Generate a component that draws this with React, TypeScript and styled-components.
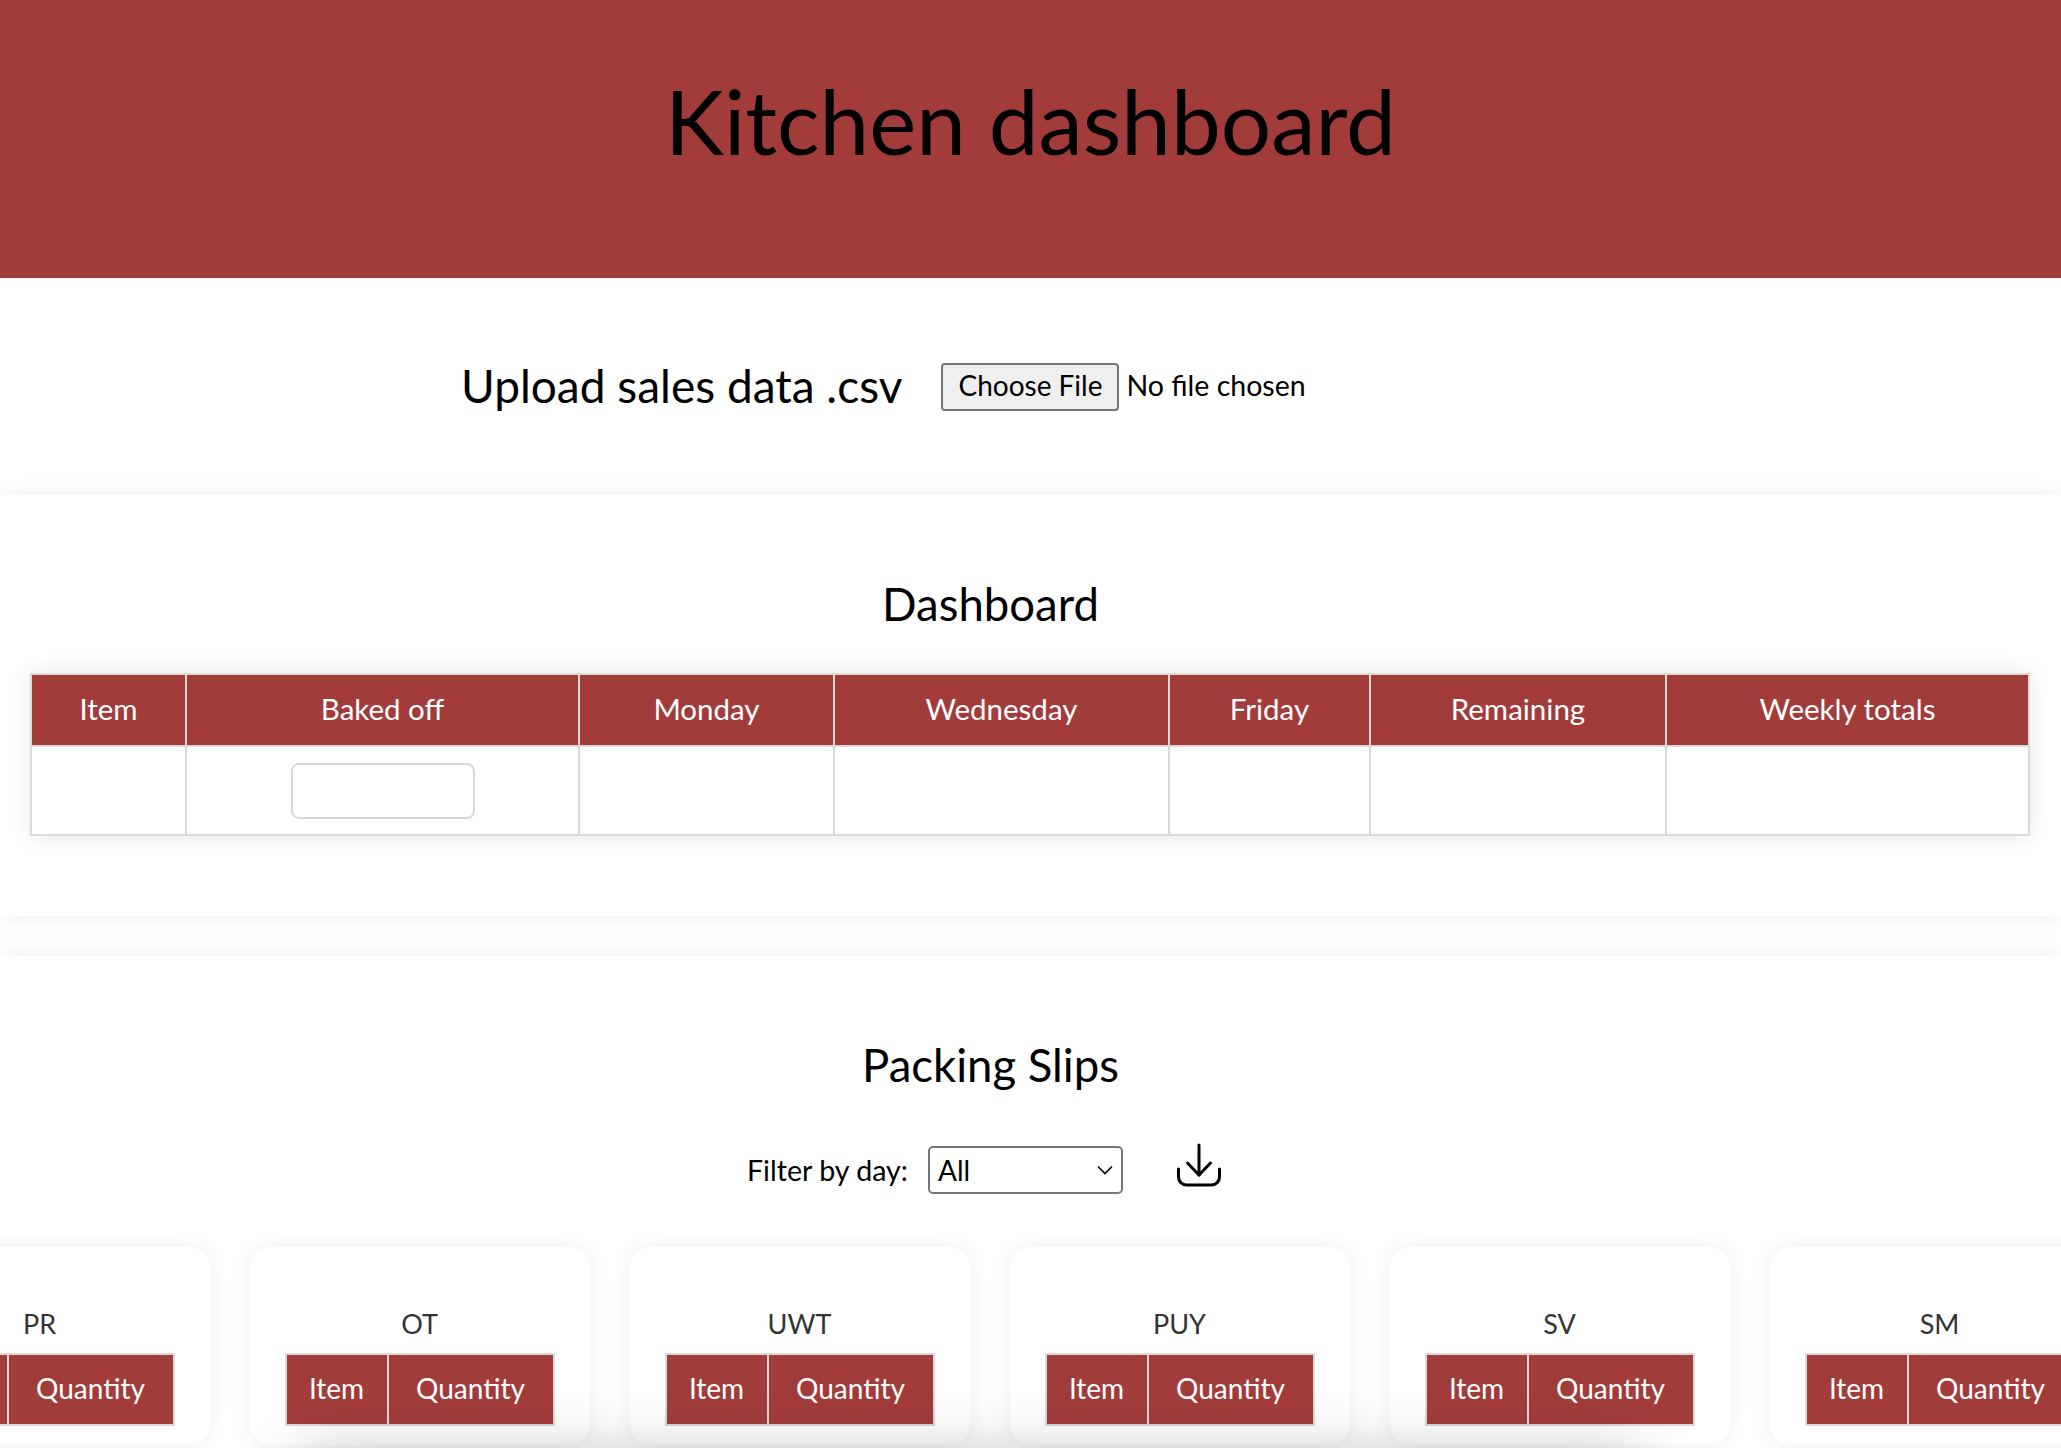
import React from 'react';
import styled, { createGlobalStyle } from 'styled-components';

const RED = '#a23c3b';
const LINE = '#d9d9d9';
const FONT = '"Lato", "Open Sans", sans-serif';

const GlobalStyle = createGlobalStyle`
  html, body {
    margin: 0;
    padding: 0;
    background: #fff;
    color: #000;
    font-family: ${FONT};
  }
`;

const Page = styled.div`
  position: relative;
  width: 2061px;
  height: 1448px;
  overflow: hidden;
`;

const Header = styled.header`
  height: 278px;
  background: ${RED};
  display: flex;
  justify-content: center;
  padding-top: 63px;
  box-sizing: border-box;
`;

const Title = styled.h1`
  margin: 0;
  font-size: 89px;
  line-height: 116px;
  font-weight: 400;
  color: #000;
`;

const UploadRow = styled.section`
  height: 217px;
  box-sizing: border-box;
  padding: 80px 0 0 461px;
  display: flex;
  align-items: flex-start;
  gap: 39px;
`;

const UploadLabel = styled.label`
  font-size: 46px;
  line-height: 58px;
  margin-top: -1px;
`;

const FileInput = styled.input`
  font: 28.5px ${FONT};
  color: #000;
  margin-top: 5px;

  &::file-selector-button {
    font: 28px ${FONT};
    height: 48px;
    width: 178px;
    margin-right: 7px;
    padding: 0 0 4px;
    background: #efefef;
    border: 2px solid #767676;
    border-radius: 4px;
    color: #000;
  }
`;

const Panel = styled.section<{ $height: number }>`
  height: ${(p) => p.$height}px;
  box-sizing: border-box;
  background: #fff;
  box-shadow: 0 0 20px rgba(0, 0, 0, 0.07);
  margin-bottom: 40px;
`;

const PanelTitle = styled.h2`
  margin: 0;
  padding: 80px 80px 0 0;
  text-align: center;
  font-size: 45.5px;
  line-height: 58px;
  font-weight: 400;
`;

const DataTable = styled.table`
  border-collapse: collapse;
  table-layout: fixed;
  background: #fff;
  box-shadow: 0 0 20px rgba(0, 0, 0, 0.1);
`;

const MainTable = styled(DataTable)`
  width: 1998px;
  margin: 40px 0 0 30px;
  height: 163px;
`;

const HeadCell = styled.th<{ $size?: number }>`
  background: ${RED};
  color: #fff;
  font-weight: 400;
  font-size: ${(p) => p.$size ?? 29.5}px;
  padding: 0 0 3px;
  border: 2px solid ${LINE};
  height: 67px;
`;

const BodyCell = styled.td`
  border: 2px solid ${LINE};
  padding: 0;
  text-align: center;
  vertical-align: middle;
`;

const BakedInput = styled.input`
  display: block;
  margin: 0 auto;
  width: 184px;
  height: 56px;
  box-sizing: border-box;
  border: 2px solid ${LINE};
  border-radius: 8px;
  background: #fff;
`;

const FilterRow = styled.div`
  display: flex;
  align-items: center;
  margin: 52px 0 53px;
  padding-left: 747px;
  height: 48px;
`;

const FilterLabel = styled.label`
  font-size: 28.6px;
  width: 181px;
`;

const DaySelect = styled.div`
  width: 195px;
  height: 48px;
  box-sizing: border-box;
  border: 2px solid #767676;
  border-radius: 5px;
  display: flex;
  align-items: center;
  justify-content: space-between;
  padding: 0 7px 0 8px;
  font-size: 28px;
`;

const DownloadButton = styled.button`
  width: 46px;
  height: 46px;
  margin: -8px 0 0 53px;
  padding: 0;
  background: none;
  border: 0;
  color: #000;
`;

const SlipRow = styled.div`
  display: flex;
  justify-content: center;
  gap: 40px;
  margin: 0 82px 0 0;
`;

const SlipCard = styled.article`
  flex: 0 0 340px;
  min-width: 0;
  height: 198px;
  box-sizing: border-box;
  padding: 59px 35px 0;
  background: #fff;
  border-radius: 20px;
  box-shadow: 0 0 20px rgba(0, 0, 0, 0.07);
`;

const SlipName = styled.h3`
  margin: 0 0 11px;
  text-align: center;
  font-size: 27px;
  line-height: 36px;
  font-weight: 400;
  color: #333;
`;

const SlipTable = styled(DataTable)`
  width: 268px;
  box-shadow: none;

  & th {
    height: 66px;
  }
`;

const BottomShade = styled.div`
  position: absolute;
  left: 300px;
  width: 1340px;
  top: 1452px;
  height: 120px;
  pointer-events: none;
  box-shadow: 0 0 60px rgba(0, 0, 0, 0.22);
`;

const columns: [string, number][] = [
  ['Item', 155],
  ['Baked off', 393],
  ['Monday', 255],
  ['Wednesday', 335],
  ['Friday', 201],
  ['Remaining', 296],
  ['Weekly totals', 363],
];

const slips = ['PR', 'OT', 'UWT', 'PUY', 'SV', 'SM'];

const Chevron = () => (
  <svg width="18" height="12" viewBox="0 0 18 12" fill="none" stroke="#000" strokeWidth="1.6">
    <path d="M2 2.5 L9 9.5 L16 2.5" />
  </svg>
);

const DownloadIcon = () => (
  <svg width="46" height="46" viewBox="-1 -1 46 46" fill="none" stroke="currentColor" strokeWidth="3" strokeLinecap="round" strokeLinejoin="round">
    <path d="M22 1 V31" />
    <path d="M10.5 19 L22 31 L33.5 19" />
    <path d="M1.5 25 V33 A8 8 0 0 0 9.5 41 H34.5 A8 8 0 0 0 42.5 33 V25" />
  </svg>
);

export default function App() {
  return (
    <Page>
      <GlobalStyle />
      <Header>
        <Title>Kitchen dashboard</Title>
      </Header>
      <UploadRow>
        <UploadLabel>Upload sales data .csv</UploadLabel>
        <FileInput type="file" />
      </UploadRow>
      <Panel $height={421}>
        <PanelTitle>Dashboard</PanelTitle>
        <MainTable>
          <colgroup>
            {columns.map(([name, width]) => (
              <col key={name} width={width} />
            ))}
          </colgroup>
          <thead>
            <tr>
              {columns.map(([name]) => (
                <HeadCell key={name}>{name}</HeadCell>
              ))}
            </tr>
          </thead>
          <tbody>
            <tr>
              {columns.map(([name]) => (
                <BodyCell key={name}>{name === 'Baked off' && <BakedInput type="text" />}</BodyCell>
              ))}
            </tr>
          </tbody>
        </MainTable>
      </Panel>
      <Panel $height={492}>
        <PanelTitle>Packing Slips</PanelTitle>
        <FilterRow>
          <FilterLabel>Filter by day:</FilterLabel>
          <DaySelect>
            All
            <Chevron />
          </DaySelect>
          <DownloadButton aria-label="Download">
            <DownloadIcon />
          </DownloadButton>
        </FilterRow>
        <SlipRow>
          {slips.map((slip) => (
            <SlipCard key={slip}>
              <SlipName>{slip}</SlipName>
              <SlipTable>
                <colgroup>
                  <col width={102} />
                  <col width={166} />
                </colgroup>
                <thead>
                  <tr>
                    <HeadCell $size={28}>Item</HeadCell>
                    <HeadCell $size={28}>Quantity</HeadCell>
                  </tr>
                </thead>
              </SlipTable>
            </SlipCard>
          ))}
        </SlipRow>
      </Panel>
      <BottomShade />
    </Page>
  );
}
